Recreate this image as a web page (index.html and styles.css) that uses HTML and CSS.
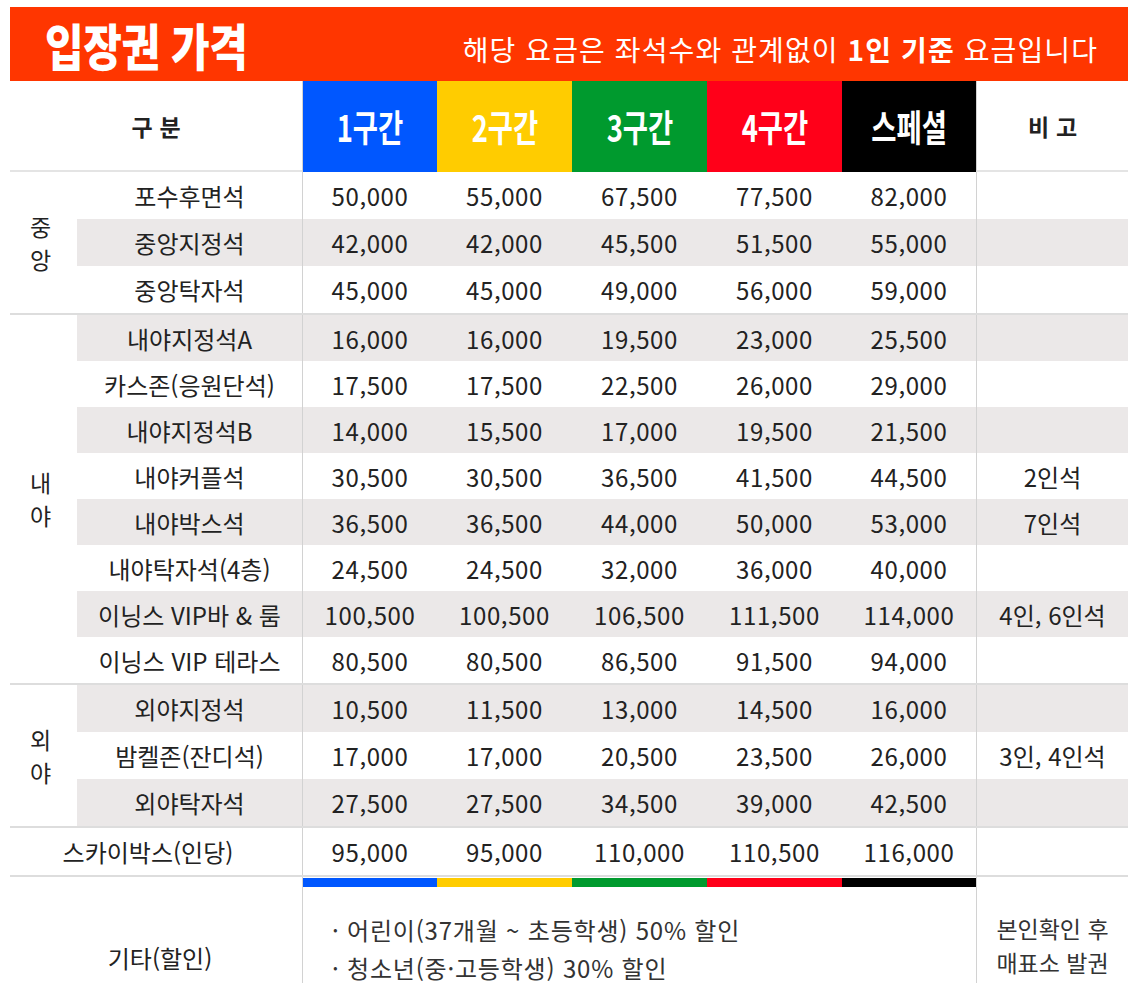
FILE: index.html
```html
<!DOCTYPE html>
<html lang="ko">
<head>
<meta charset="utf-8">
<title>입장권 가격</title>
<link rel="stylesheet" href="styles.css">
</head>
<body>
<div class="page">
  <div class="title-bar">
    <span class="title">입장권 가격</span>
    <span class="subtitle">해당 요금은 좌석수와 관계없이 <b>1인 기준</b> 요금입니다</span>
  </div>

  <div class="head">
    <div class="label">구분</div>
    <div class="zone z1 first"><span>1구간</span></div>
    <div class="zone z2"><span>2구간</span></div>
    <div class="zone z3"><span>3구간</span></div>
    <div class="zone z4"><span>4구간</span></div>
    <div class="zone z5"><span>스페셜</span></div>
    <div class="label note">비고</div>
  </div>

  <div class="group">
    <div class="group-label"><span>중</span><span>앙</span></div>
    <div class="group-rows">
      <div class="row tall"><div class="cat">포수후면석</div><div class="num first">50,000</div><div class="num">55,000</div><div class="num">67,500</div><div class="num">77,500</div><div class="num">82,000</div><div class="note"></div></div>
      <div class="row tall alt"><div class="cat">중앙지정석</div><div class="num first">42,000</div><div class="num">42,000</div><div class="num">45,500</div><div class="num">51,500</div><div class="num">55,000</div><div class="note"></div></div>
      <div class="row tall"><div class="cat">중앙탁자석</div><div class="num first">45,000</div><div class="num">45,000</div><div class="num">49,000</div><div class="num">56,000</div><div class="num">59,000</div><div class="note"></div></div>
    </div>
  </div>

  <div class="group">
    <div class="group-label"><span>내</span><span>야</span></div>
    <div class="group-rows">
      <div class="row alt"><div class="cat">내야지정석A</div><div class="num first">16,000</div><div class="num">16,000</div><div class="num">19,500</div><div class="num">23,000</div><div class="num">25,500</div><div class="note"></div></div>
      <div class="row"><div class="cat">카스존(응원단석)</div><div class="num first">17,500</div><div class="num">17,500</div><div class="num">22,500</div><div class="num">26,000</div><div class="num">29,000</div><div class="note"></div></div>
      <div class="row alt"><div class="cat">내야지정석B</div><div class="num first">14,000</div><div class="num">15,500</div><div class="num">17,000</div><div class="num">19,500</div><div class="num">21,500</div><div class="note"></div></div>
      <div class="row"><div class="cat">내야커플석</div><div class="num first">30,500</div><div class="num">30,500</div><div class="num">36,500</div><div class="num">41,500</div><div class="num">44,500</div><div class="note">2인석</div></div>
      <div class="row alt"><div class="cat">내야박스석</div><div class="num first">36,500</div><div class="num">36,500</div><div class="num">44,000</div><div class="num">50,000</div><div class="num">53,000</div><div class="note">7인석</div></div>
      <div class="row"><div class="cat">내야탁자석(4층)</div><div class="num first">24,500</div><div class="num">24,500</div><div class="num">32,000</div><div class="num">36,000</div><div class="num">40,000</div><div class="note"></div></div>
      <div class="row alt"><div class="cat">이닝스 VIP바 &amp; 룸</div><div class="num first">100,500</div><div class="num">100,500</div><div class="num">106,500</div><div class="num">111,500</div><div class="num">114,000</div><div class="note">4인, 6인석</div></div>
      <div class="row"><div class="cat">이닝스 VIP 테라스</div><div class="num first">80,500</div><div class="num">80,500</div><div class="num">86,500</div><div class="num">91,500</div><div class="num">94,000</div><div class="note"></div></div>
    </div>
  </div>

  <div class="group">
    <div class="group-label"><span>외</span><span>야</span></div>
    <div class="group-rows">
      <div class="row tall alt"><div class="cat">외야지정석</div><div class="num first">10,500</div><div class="num">11,500</div><div class="num">13,000</div><div class="num">14,500</div><div class="num">16,000</div><div class="note"></div></div>
      <div class="row tall"><div class="cat">밤켈존(잔디석)</div><div class="num first">17,000</div><div class="num">17,000</div><div class="num">20,500</div><div class="num">23,500</div><div class="num">26,000</div><div class="note">3인, 4인석</div></div>
      <div class="row tall alt"><div class="cat">외야탁자석</div><div class="num first">27,500</div><div class="num">27,500</div><div class="num">34,500</div><div class="num">39,000</div><div class="num">42,500</div><div class="note"></div></div>
    </div>
  </div>

  <div class="sky">
    <div class="cat">스카이박스(인당)</div><div class="num first">95,000</div><div class="num">95,000</div><div class="num">110,000</div><div class="num">110,500</div><div class="num">116,000</div><div class="note"></div>
  </div>

  <div class="bottom">
    <div class="etc">기타(할인)</div>
    <div class="discounts">
      <div class="bar"><i class="z1"></i><i class="z2"></i><i class="z3"></i><i class="z4"></i><i class="z5"></i></div>
      <ul class="list">
        <li>· 어린이(37개월 ~ 초등학생) 50% 할인</li>
        <li>· 청소년(중·고등학생) 30% 할인</li>
      </ul>
    </div>
    <div class="etc-note">본인확인 후<br>매표소 발권<br>(신분증 지참 필수)</div>
  </div>
</div>
</body>
</html>
```

FILE: styles.css
```css
body {
  margin: 0;
  background: #fff;
  color: #222;
  font-family: "Noto Sans CJK KR", "Noto Sans", sans-serif;
}

.page {
  width: 1118px;
  margin: 7px 0 0 10px;
}

/* Title bar */
.title-bar {
  height: 74px;
  background: #ff3600;
  color: #fff;
  display: flex;
  justify-content: space-between;
  align-items: center;
  padding: 0 30px 0 35px;
  box-sizing: border-box;
}

.title {
  display: inline-block;
  font-size: 50px;
  font-weight: 900;
  line-height: 1;
  letter-spacing: -0.5px;
  white-space: nowrap;
  transform: scaleX(0.84);
  transform-origin: left center;
}

.subtitle {
  font-size: 28px;
  letter-spacing: 1.1px;
  padding-top: 10px;
  white-space: nowrap;
}

.subtitle b {
  font-weight: 700;
}

/* Header */
.head {
  display: grid;
  grid-template-columns: 292px 135px 135px 135px 135px 134px 152px;
  height: 91px;
}

.head .label {
  display: flex;
  align-items: center;
  justify-content: center;
  font-size: 23px;
  font-weight: 700;
  letter-spacing: 0.3em;
  padding-left: 0.3em;
  border-bottom: 2px solid #e4e4e4;
}

.head .label.note {
  border-left: 1px solid #d2d2d2;
}

.zone {
  display: flex;
  align-items: center;
  justify-content: center;
  color: #fff;
}

.zone.first {
  border-left: 1px solid #d2d2d2;
}

.zone span {
  display: inline-block;
  font-size: 37px;
  font-weight: 700;
  line-height: 1;
  transform: scaleX(0.74);
  white-space: nowrap;
}

.z1 { background: #0057ff; }
.z2 { background: #ffcc00; }
.z3 { background: #009a2e; }
.z4 { background: #ff0019; }
.z5 { background: #000; }

/* Groups */
.group {
  display: flex;
  border-bottom: 2px solid #dddddd;
}

.group-label {
  width: 67px;
  flex: none;
  display: flex;
  flex-direction: column;
  align-items: center;
  justify-content: center;
  font-size: 23px;
  line-height: 33px;
  padding-right: 6px;
  box-sizing: border-box;
}

.group-rows {
  flex: 1;
}

.row {
  display: grid;
  grid-template-columns: 225px 135px 135px 135px 135px 134px 152px;
  height: 46px;
}

.row.tall {
  height: 47px;
}

.row.alt {
  background: #ebe8e8;
}

.row > div,
.sky > div {
  display: flex;
  align-items: center;
  justify-content: center;
  font-size: 24px;
  white-space: nowrap;
}

.num {
  letter-spacing: 0.6px;
}

.num.first,
.note {
  border-left: 1px solid #d2d2d2;
}

/* Skybox */
.sky {
  display: grid;
  grid-template-columns: 292px 135px 135px 135px 135px 134px 152px;
  height: 47px;
  border-bottom: 2px solid #dddddd;
}

.sky .cat {
  padding-right: 16px;
}

/* Bottom */
.bottom {
  display: grid;
  grid-template-columns: 292px 674px 152px;
  height: 140px;
}

.etc {
  font-size: 24px;
  line-height: 30px;
  padding-top: 66px;
  text-align: center;
  padding-left: 8px;
}

.discounts {
  border-left: 1px solid #d2d2d2;
}

.bar {
  display: flex;
  height: 9px;
  margin-top: 1px;
}

.bar i {
  display: block;
  width: 135px;
}

.bar i.z1,
.bar i.z5 {
  width: 134px;
}

.list {
  list-style: none;
  margin: 0;
  padding: 24px 0 0 29px;
  font-size: 24px;
  line-height: 38px;
  letter-spacing: 0.8px;
  color: #333;
}

.etc-note {
  border-left: 1px solid #d2d2d2;
  text-align: center;
  font-size: 23px;
  line-height: 34px;
  padding-top: 34px;
  color: #333;
  white-space: nowrap;
}
```
